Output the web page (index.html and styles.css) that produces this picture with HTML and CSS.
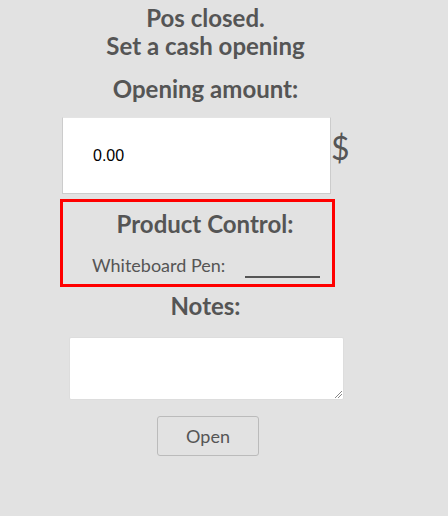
FILE: index.html
```html
<!DOCTYPE html>
<html>
<head>
<meta charset="utf-8">
<link rel="stylesheet" href="styles.css">
</head>
<body>
<div class="page">
  <h2 class="title">Pos closed.<br>Set a cash opening</h2>
  <h3 class="heading">Opening amount:</h3>
  <div class="amount-row">
    <div class="amount-input">0.00</div>
    <span class="currency">$</span>
  </div>
  <div class="product-control">
    <h3 class="heading pc-heading">Product Control:</h3>
    <div class="pc-row">
      <span class="pc-label">Whiteboard Pen:</span>
      <span class="pc-input"></span>
    </div>
  </div>
  <h3 class="heading notes-heading">Notes:</h3>
  <div class="notes"><span class="grip"></span></div>
  <button class="open-btn">Open</button>
</div>
</body>
</html>
```
FILE: styles.css
```css
html, body {
  margin: 0;
  padding: 0;
  background: #e2e2e2;
}
body {
  width: 448px;
  height: 516px;
  font-family: Lato, "Open Sans", sans-serif;
  color: #555555;
}
.page {
  width: 411px;
  display: flex;
  flex-direction: column;
  align-items: center;
}
.title {
  margin: 4px 0 0 0;
  font-size: 24px;
  line-height: 28px;
  font-weight: 700;
  text-align: center;
}
.heading {
  margin: 0;
  font-size: 24px;
  line-height: 28px;
  font-weight: 700;
  text-align: center;
}
.title + .heading {
  margin-top: 15px;
}
.amount-row {
  align-self: flex-start;
  display: flex;
  align-items: center;
  margin-top: 14px;
  margin-left: 62px;
}
.amount-input {
  box-sizing: border-box;
  width: 269px;
  height: 77px;
  background: #fff;
  border: 1px solid #cccccc;
  border-top-color: #e4e4e4;
  font-family: "Liberation Sans", Arial, sans-serif;
  font-size: 16px;
  color: #000;
  padding-left: 30px;
  display: flex;
  align-items: center;
}
.currency {
  font-size: 32px;
  line-height: 34px;
  margin-top: -16px;
  margin-left: 0;
}
.product-control {
  box-sizing: border-box;
  align-self: flex-start;
  margin-left: 60px;
  margin-top: 5px;
  width: 275px;
  height: 88px;
  border: 3px solid #ff0000;
  display: flex;
  flex-direction: column;
  align-items: center;
}
.pc-heading {
  margin-top: 8px;
  margin-left: 15px;
}
.pc-row {
  align-self: stretch;
  display: flex;
  align-items: flex-end;
  margin-top: 16px;
  padding-left: 29px;
}
.pc-label {
  font-size: 18px;
  line-height: 22px;
}
.pc-input {
  display: block;
  width: 75px;
  height: 0;
  border-bottom: 2px solid #555555;
  margin-left: 20px;
  margin-bottom: -2px;
}
.notes-heading {
  margin-top: 5px;
}
.notes {
  box-sizing: border-box;
  position: relative;
  width: 275px;
  height: 63px;
  background: #fff;
  border: 1px solid #dddddd;
  border-radius: 2px;
  margin-top: 17px;
  margin-left: 1px;
}
.grip {
  position: absolute;
  right: 1px;
  bottom: 1px;
  width: 7px;
  height: 7px;
  background: linear-gradient(135deg, transparent 45%, #888 46%, #888 52%, transparent 53%, transparent 70%, #888 71%, #888 77%, transparent 78%);
}
.open-btn {
  box-sizing: border-box;
  width: 102px;
  height: 40px;
  margin-top: 16px;
  margin-left: 5px;
  background: #e2e2e2;
  border: 1px solid #bbbbbb;
  border-radius: 3px;
  font-family: Lato, sans-serif;
  font-size: 18px;
  color: #555555;
}
```
